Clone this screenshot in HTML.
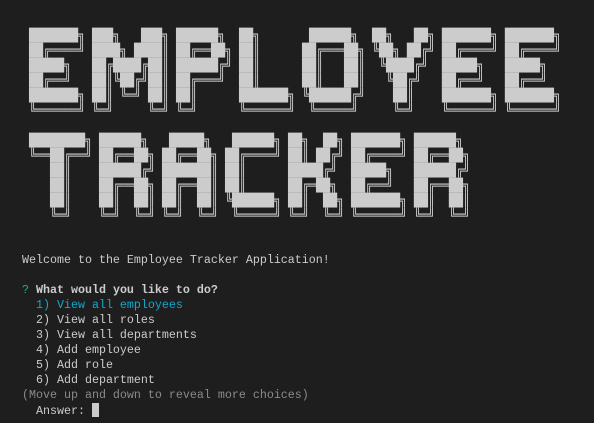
<!DOCTYPE html>
<html><head><meta charset="utf-8"><style>
html,body{margin:0;padding:0;background:#1e1e1e;width:594px;height:423px;overflow:hidden}
#t{position:absolute;left:22px;top:28px}
.l{height:15px;line-height:15px;white-space:pre;color:#cccccc;font-family:"Liberation Mono","DejaVu Sans Mono",monospace;font-size:11.67px;overflow:visible}
.a{font-family:"DejaVu Sans Mono","Liberation Mono",monospace;font-size:11.63px;color:#cccccc;transform:scaleY(1.08);transform-origin:50% 50%}
.b{font-weight:bold}
.c{color:#11a8cd}
.g{color:#0dbc79}
.m{color:#8a8a8a}
.cur{display:inline-block;width:7px;height:14px;background:#cccccc;vertical-align:-3px}
</style></head><body><div id="t">
<div class="l a"> ███████╗ ███╗   ███╗ ██████╗  ██╗       ██████╗  ██╗   ██╗ ███████╗ ███████╗</div>
<div class="l a"> ██╔════╝ ████╗ ████║ ██╔══██╗ ██║      ██╔═══██╗ ╚██╗ ██╔╝ ██╔════╝ ██╔════╝</div>
<div class="l a"> █████╗   ██╔████╔██║ ██████╔╝ ██║      ██║   ██║  ╚████╔╝  █████╗   █████╗  </div>
<div class="l a"> ██╔══╝   ██║╚██╔╝██║ ██╔═══╝  ██║      ██║   ██║   ╚██╔╝   ██╔══╝   ██╔══╝  </div>
<div class="l a"> ███████╗ ██║ ╚═╝ ██║ ██║      ███████╗ ╚██████╔╝    ██║    ███████╗ ███████╗</div>
<div class="l a"> ╚══════╝ ╚═╝     ╚═╝ ╚═╝      ╚══════╝  ╚═════╝     ╚═╝    ╚══════╝ ╚══════╝</div>
<div class="l"> </div>
<div class="l a"> ████████╗ ██████╗   █████╗   ██████╗ ██╗  ██╗ ███████╗ ██████╗ </div>
<div class="l a"> ╚══██╔══╝ ██╔══██╗ ██╔══██╗ ██╔════╝ ██║ ██╔╝ ██╔════╝ ██╔══██╗</div>
<div class="l a">    ██║    ██████╔╝ ███████║ ██║      █████╔╝  █████╗   ██████╔╝</div>
<div class="l a">    ██║    ██╔══██╗ ██╔══██║ ██║      ██╔═██╗  ██╔══╝   ██╔══██╗</div>
<div class="l a">    ██║    ██║  ██║ ██║  ██║ ╚██████╗ ██║  ██╗ ███████╗ ██║  ██║</div>
<div class="l a">    ╚═╝    ╚═╝  ╚═╝ ╚═╝  ╚═╝  ╚═════╝ ╚═╝  ╚═╝ ╚══════╝ ╚═╝  ╚═╝</div>
<div class="l"> </div>
<div class="l"> </div>
<div class="l">Welcome to the Employee Tracker Application!</div>
<div class="l"> </div>
<div class="l"><span class="g">?</span> <span class="b">What would you like to do?</span></div>
<div class="l c">  1) View all employees</div>
<div class="l">  2) View all roles</div>
<div class="l">  3) View all departments</div>
<div class="l">  4) Add employee</div>
<div class="l">  5) Add role</div>
<div class="l">  6) Add department</div>
<div class="l m">(Move up and down to reveal more choices)</div>
<div class="l">  Answer: <span class="cur"></span></div>
</div></body></html>
